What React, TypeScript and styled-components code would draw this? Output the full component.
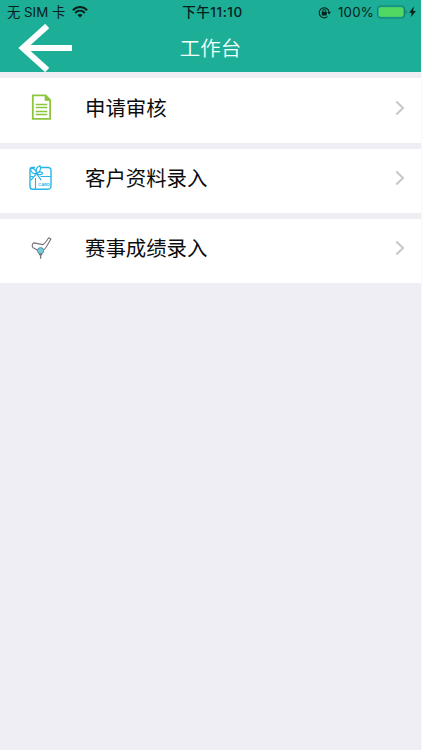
import React from "react";
import styled, { createGlobalStyle } from "styled-components";

const GlobalStyle = createGlobalStyle`
  * { box-sizing: border-box; }
  body { margin: 0; background: #efeff4; font-family: "Liberation Sans", "Noto Sans CJK SC", sans-serif; }
  svg { display: block; flex: none; }
`;

const Screen = styled.div`
  width: 422px;
  height: 750px;
  overflow: hidden;
  background: #efeef4;
  border-right: 1px solid #f8f8fb;
`;

const Header = styled.header`
  height: 72px;
  background: #1cae97;
`;

const StatusBar = styled.div`
  display: grid;
  grid-template-columns: 1fr auto 1fr;
  align-items: center;
  height: 24px;
  padding: 0 5px 0 7px;
  color: #08201c;
  font-family: Inter, "Noto Sans CJK SC", sans-serif;
  font-size: 13.3px;
  line-height: 24px;
  white-space: nowrap;
`;

const Carrier = styled.div`
  display: flex;
  align-items: center;
  gap: 7px;
`;

const Clock = styled.div`
  padding-left: 2px;
  font-weight: 500;
  font-size: 13.5px;
  letter-spacing: 0.55px;
`;

const Power = styled.div`
  display: flex;
  align-items: center;
  justify-content: flex-end;
`;

const Percent = styled.span`
  margin: 0 3px 0 7px;
  font-size: 13.3px;
  letter-spacing: 0.2px;
`;

const NavBar = styled.div`
  display: grid;
  grid-template-columns: 80px 1fr 80px;
  align-items: center;
  height: 48px;
`;

const BackButton = styled.button`
  padding: 0 0 0 18px;
  border: 0;
  background: none;
`;

const Title = styled.h1`
  margin: 0;
  color: #f4fffc;
  font: 350 20.5px/46px "Noto Sans CJK SC", sans-serif;
  height: 48px;
  text-align: center;
`;

const Menu = styled.main`
  display: flex;
  flex-direction: column;
  gap: 6px;
  padding-top: 6px;
`;

const MenuRow = styled.div<{ $height: number }>`
  display: flex;
  align-items: center;
  height: ${(p) => p.$height}px;
  padding: 0 16px 6px 25px;
  background: #fff;
`;

const IconBox = styled.span`
  display: flex;
  width: 32px;
  height: 32px;
`;

const Label = styled.span`
  flex: 1;
  margin: 0 0 2px 28px;
  color: #0c0c0c;
  font: 400 20.4px/30px "Noto Sans CJK SC", sans-serif;
`;

const WifiIcon = () => (
  <svg width="16" height="12" viewBox="0 0 16 12" fill="none" stroke="#08201c" strokeWidth="2.1">
    <path d="M.9 4.3C5-.1 11-.1 15.1 4.3" />
    <path d="M3.2 6.9c2.8-2.8 6.8-2.8 9.6 0" />
    <path d="M8 11.7 5.5 9.1c1.4-1.4 3.6-1.4 5 0Z" fill="#08201c" stroke="none" />
  </svg>
);

const LockIcon = () => (
  <svg width="13" height="13" viewBox="0 0 13 13" fill="none" stroke="#08201c">
    <path d="M9.4 10.7A5 5 0 1 1 11.2 6.4" strokeWidth="1.1" />
    <path d="M9.3 6h3.6l-1.8 2.4Z" fill="#08201c" stroke="none" />
    <rect x="3.8" y="5.7" width="4.9" height="3.8" rx=".5" fill="#08201c" stroke="none" />
    <path d="M4.8 6V4.8a1.45 1.45 0 0 1 2.9 0V6" strokeWidth="1" />
  </svg>
);

const BatteryIcon = () => (
  <svg width="32" height="14" viewBox="0 0 32 14">
    <rect x=".6" y="1" width="26.9" height="12" rx="3.4" fill="none" stroke="#12806f" strokeWidth="1.1" />
    <rect x="1.8" y="2.2" width="24.5" height="9.6" rx="2" fill="#50d863" />
    <path d="M28.6 5c1.8.7 1.8 3.5 0 4.2Z" fill="#12806f" />
  </svg>
);

const BoltIcon = () => (
  <svg width="7" height="12" viewBox="0 0 7 12">
    <path d="M4.9.6.1 6.8h2.6L1.8 11.3 6.9 5H4.1Z" fill="#08201c" />
  </svg>
);

const BackIcon = () => (
  <svg width="54" height="48" viewBox="0 0 54 48" fill="none" stroke="#fff" strokeWidth="6">
    <path d="M29.2 2 4.8 24l24.4 22M5 24h49" />
  </svg>
);

const DocumentIcon = () => (
  <svg width="32" height="32" viewBox="0 0 32 32" fill="none" stroke="#8cc63f" strokeWidth="1.8">
    <path d="M7.8 3.4h12.8l4.5 4.5v19H7.8Z" strokeLinejoin="round" />
    <path d="M20 3v5.5h5.5Z" fill="#8cc63f" strokeWidth=".7" />
    <path d="M10.7 12.5h11.6M10.7 15.5h11.6M10.7 19.5h11.6M10.7 22.5h11.6" strokeWidth="1.3" />
  </svg>
);

const CardIcon = () => (
  <svg width="32" height="32" viewBox="0 0 32 32" fill="none" stroke="#27b5e9" strokeWidth="1.4">
    <path d="M15.5 5.5h7.7A2.8 2.8 0 0 1 26 8.3v16.1a2.8 2.8 0 0 1-2.8 2.8H7.8A2.8 2.8 0 0 1 5 24.4V7.8Q5 5.5 7.3 5.5H10" />
    <path d="M5 14.5h3M15.5 14.5H26M10.5 16v11" strokeWidth="1.1" />
    <path d="M11.5 11.5C8.2 12.2 5.7 10.2 5.6 6.6c3-.6 5.1 1.2 5.9 4.9Zm0 0C10.5 7.7 12 4.7 15 3.7c1.5 3 .1 6.2-3.5 7.8Zm0 0c2.2-2.1 5.2-2.2 6.1-.5-.7 2-3.6 2.4-6.1.5Zm0 .3L6 18M11.8 12l4.4 6.2" strokeWidth="1.2" />
    <text x="13.3" y="24.4" fill="#27b5e9" stroke="none" fontFamily="Liberation Sans, sans-serif" fontSize="4" fontWeight="700">CARD</text>
  </svg>
);

const GolfIcon = () => (
  <svg width="32" height="32" viewBox="0 0 32 32" fill="none" stroke="#77737d" strokeWidth="1.1">
    <path d="m14 18.9-6.2-3.4c-1.2-1.7-.5-4.4 1.5-4.6l8.2 1.7c2.2-.5 4.2-3.6 6.2-6.8l2.3 1.1-4.9 8.3c-1.1 1.9-2.7 2.9-3.7 3.6" strokeLinejoin="round" />
    <circle cx="15.6" cy="18.7" r="3.1" fill="#78c9d8" stroke="#49899a" strokeWidth=".9" />
    <path d="M13.9 22.5h3.4M15.6 22v4.8" strokeWidth="1.3" />
  </svg>
);

const Chevron = () => (
  <svg width="10" height="16" viewBox="0 0 10 16" fill="none" stroke="#c7c7cc" strokeWidth="2">
    <path d="m1.3 1.5 6.7 6.5-6.7 6.5" />
  </svg>
);

const items = [
  { label: "申请审核", icon: <DocumentIcon />, height: 65 },
  { label: "客户资料录入", icon: <CardIcon />, height: 64 },
  { label: "赛事成绩录入", icon: <GolfIcon />, height: 64 },
];

export default function App() {
  return (
    <Screen>
      <GlobalStyle />
      <Header>
        <StatusBar>
          <Carrier><span>无 SIM 卡</span><WifiIcon /></Carrier>
          <Clock>下午11:10</Clock>
          <Power><LockIcon /><Percent>100%</Percent><BatteryIcon /><BoltIcon /></Power>
        </StatusBar>
        <NavBar>
          <BackButton aria-label="返回"><BackIcon /></BackButton>
          <Title>工作台</Title>
        </NavBar>
      </Header>
      <Menu>
        {items.map((item) => (
          <MenuRow key={item.label} $height={item.height}>
            <IconBox>{item.icon}</IconBox>
            <Label>{item.label}</Label>
            <Chevron />
          </MenuRow>
        ))}
      </Menu>
    </Screen>
  );
}
